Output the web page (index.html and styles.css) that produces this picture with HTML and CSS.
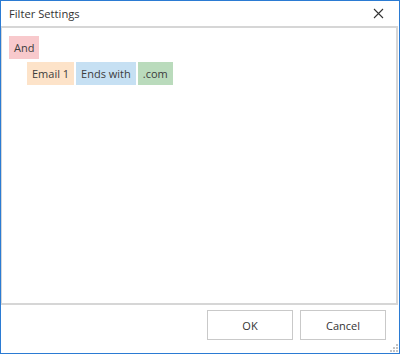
FILE: index.html
```html
<!DOCTYPE html>
<html lang="en">
  <head>
    <meta charset="UTF-8" />
    <meta name="viewport" content="width=device-width, initial-scale=1.0" />
    <title>Filter Settings</title>
    <link rel="stylesheet" href="styles.css">
  </head>
  <body>
    <div class="window">
      <div class="titlebar">
        <span class="title">Filter Settings</span>
        <button class="close" aria-label="Close">
          <svg width="11" height="11" viewBox="0 0 11 11">
            <path d="M1 1 L10 10 M10 1 L1 10" stroke="#333" stroke-width="1.1" fill="none" />
          </svg>
        </button>
      </div>
      <div class="panel">
        <div class="row">
          <span class="tag group">And</span>
        </div>
        <div class="row indent">
          <span class="tag field">Email 1</span>
          <span class="tag operation">Ends with</span>
          <span class="tag value">.com</span>
        </div>
      </div>
      <div class="footer">
        <button class="button">OK</button>
        <button class="button">Cancel</button>
        <svg class="grip" width="8" height="8" viewBox="0 0 8 8">
          <rect x="6" y="0" width="2" height="2" fill="#c4c4c4" />
          <rect x="3" y="3" width="2" height="2" fill="#c4c4c4" />
          <rect x="6" y="3" width="2" height="2" fill="#c4c4c4" />
          <rect x="0" y="6" width="2" height="2" fill="#c4c4c4" />
          <rect x="3" y="6" width="2" height="2" fill="#c4c4c4" />
          <rect x="6" y="6" width="2" height="2" fill="#c4c4c4" />
        </svg>
      </div>
    </div>
  </body>
</html>
```

FILE: styles.css
```css
body {
  margin: 0;
  font-family: "Segoe UI", "Open Sans", sans-serif;
  font-size: 11px;
  color: #333;
  background-color: #fff;
}
.window {
  box-sizing: border-box;
  width: 400px;
  height: 354px;
  border: 1px solid #2b7bd3;
  display: flex;
  flex-direction: column;
  background-color: #fff;
}
.titlebar {
  height: 25px;
  display: flex;
  align-items: center;
  justify-content: space-between;
  padding-left: 8px;
  flex-shrink: 0;
}
.title {
  font-size: 11.2px;
  color: #333;
}
.close {
  width: 30px;
  height: 25px;
  margin-right: 6px;
  border: none;
  background: none;
  padding: 0;
  display: flex;
  align-items: center;
  justify-content: center;
}
.panel {
  flex: 1;
  margin-right: 1px;
  border-top: 2px solid #d6d6d6;
  border-bottom: 2px solid #d6d6d6;
  border-left: 1px solid #d6d6d6;
  border-right: 2px solid #d6d6d6;
  padding: 8px 7px;
}
.row {
  display: flex;
  gap: 2px;
  margin-bottom: 3px;
}
.row.indent {
  padding-left: 18px;
}
.tag {
  height: 23px;
  line-height: 23px;
  padding: 0 5px;
  font-size: 11px;
  color: #3c3c3c;
}
.tag.group {
  background-color: #f8c9cc;
}
.tag.field {
  background-color: #fde3c9;
}
.tag.operation {
  background-color: #c6e0f3;
}
.tag.value {
  background-color: #badbbc;
}
.footer {
  height: 48px;
  flex-shrink: 0;
  display: flex;
  justify-content: flex-end;
  align-items: flex-start;
  gap: 7px;
  padding: 5px 13px 0 0;
  box-sizing: border-box;
  position: relative;
}
.button {
  width: 86px;
  height: 30px;
  border: 1px solid #c9c9c9;
  background-color: #fff;
  font-family: "Segoe UI", "Open Sans", sans-serif;
  font-size: 11px;
  color: #333;
  padding: 0;
}
.grip {
  position: absolute;
  right: 1px;
  bottom: 1px;
}
```
